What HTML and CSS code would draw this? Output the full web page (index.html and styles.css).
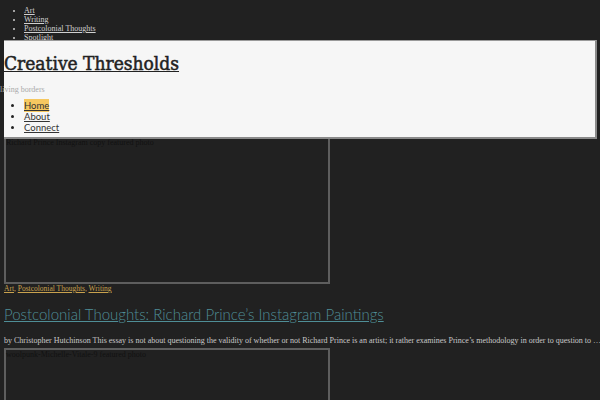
FILE: index.html
```html
<!DOCTYPE html>
<html>
<head>
<meta charset="utf-8">
<link rel="stylesheet" href="styles.css">
</head>
<body>
<ul class="topnav">
  <li><a href="#">Art</a></li>
  <li><a href="#">Writing</a></li>
  <li><a href="#">Postcolonial Thoughts</a></li>
  <li><a href="#">Spotlight</a></li>
</ul>
<header class="site-header">
  <h1 class="site-title"><a href="#">Creative Thresholds</a></h1>
  <p class="tagline">living borders</p>
  <ul class="mainnav">
    <li><a class="current" href="#">Home</a></li>
    <li><a href="#">About</a></li>
    <li><a href="#">Connect</a></li>
  </ul>
</header>
<article class="post">
  <div class="thumb">Richard Prince Instagram copy featured photo</div>
  <div class="cats"><a href="#">Art</a>, <a href="#">Postcolonial Thoughts</a>, <a href="#">Writing</a></div>
  <h2 class="post-title"><a href="#">Postcolonial Thoughts: Richard Prince’s Instagram Paintings</a></h2>
  <p class="excerpt">by Christopher Hutchinson This essay is not about questioning the validity of whether or not Richard Prince is an artist; it rather examines Prince’s methodology in order to question to …</p>
</article>
<article class="post">
  <div class="thumb">woolpunk-Michelle-Vitale-9 featured photo</div>
</article>
</body>
</html>
```
FILE: styles.css
```css
html, body {
  margin: 0;
  padding: 0;
  background: #212121;
}
body {
  padding: 0 3px 0 4px;
  font-family: "Liberation Serif", serif;
  overflow: hidden;
}
.topnav {
  margin: 0;
  padding: 6px 0 0 20px;
  list-style: disc;
  color: #ccc;
  font-size: 8px;
  line-height: 9px;
}
.topnav a {
  color: #d0d0d0;
}
.site-header {
  margin-top: -2px;
  background: #f6f6f6;
  border-top: 1px solid #9a9a9a;
  border-right: 2px solid #8a8a8a;
  border-bottom: 2px solid #8a8a8a;
  height: 96px;
  position: relative;
}
.site-title {
  margin: 11px 0 0;
  font-family: "DejaVu Serif Condensed", "DejaVu Serif", serif;
  font-size: 19px;
  line-height: 22px;
  font-weight: normal;
  -webkit-text-stroke: 0.5px #222;
}
.site-title a {
  color: #222;
}
.tagline {
  margin: 11px 0 0 -4px;
  font-size: 8px;
  line-height: 10px;
  color: #aaa;
}
.mainnav {
  margin: 5px 0 0;
  padding-left: 20px;
  font-family: "Lato", sans-serif;
  font-size: 9.5px;
  line-height: 11px;
  color: #222;
}
.mainnav a {
  color: #333;
}
.mainnav a.current {
  background: #f6c860;
  padding: 1px 0;
}
.post {
  margin-top: -3px;
}
.thumb {
  width: 322px;
  height: 144px;
  border: 2px solid #5e5e5e;
  color: #111;
  font-size: 8px;
  line-height: 10px;
}
.cats {
  font-size: 7.5px;
  line-height: 10px;
  color: #c9a24e;
}
.cats a {
  color: #c9a24e;
}
.post-title {
  margin: 9px 0 0;
  font-family: "Lato", sans-serif;
  font-weight: 300;
  font-size: 15px;
  line-height: 22px;
}
.post-title a {
  color: #4f8e97;
}
.excerpt {
  margin: 11px 0 5px;
  font-size: 8px;
  line-height: 10px;
  color: #c8c8c8;
  white-space: nowrap;
}
```
